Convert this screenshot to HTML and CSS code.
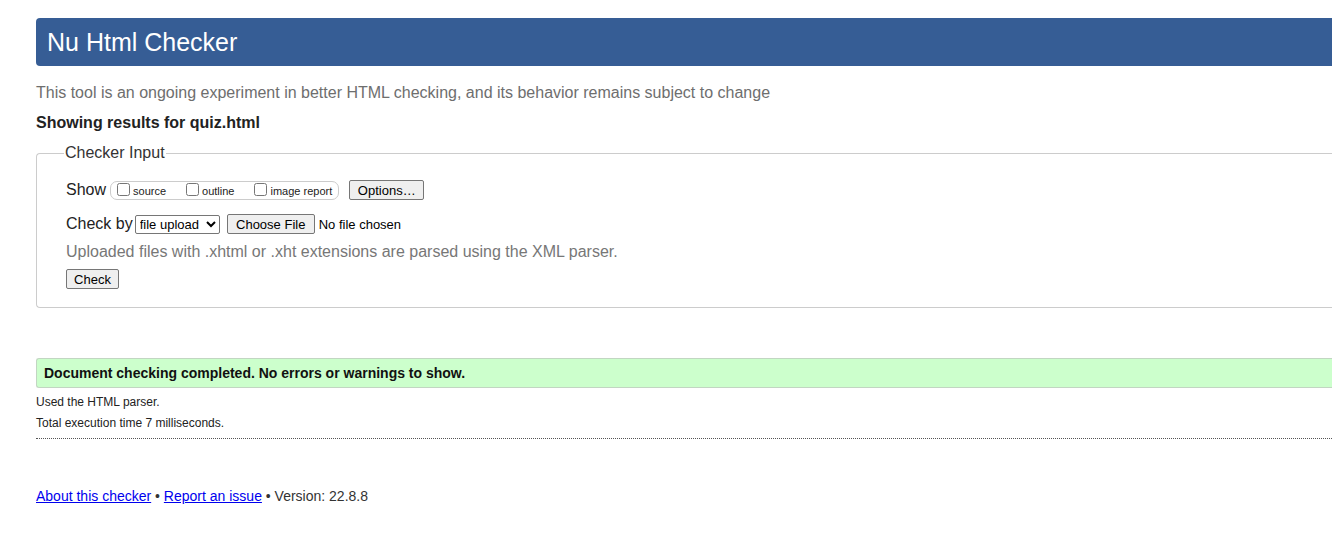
FILE: index.html
```html
<!DOCTYPE html>
<html lang="en">
<head>
<meta charset="utf-8">
<title>Showing results for quiz.html - Nu Html Checker</title>
<link rel="stylesheet" href="styles.css">
</head>
<body>
<div class="page">
  <h1 class="banner">Nu Html Checker</h1>
  <p class="intro">This tool is an ongoing experiment in better HTML checking, and its behavior remains subject to change</p>
  <p class="showing">Showing results for quiz.html</p>
  <form class="checker">
    <fieldset class="inputs">
      <legend class="legend">Checker Input</legend>
      <div class="row">
        <span class="label">Show</span>
        <span class="showbox">
          <label class="opt"><input type="checkbox" class="cb">source</label>
          <label class="opt"><input type="checkbox" class="cb">outline</label>
          <label class="opt last"><input type="checkbox" class="cb">image report</label>
        </span>
        <button type="button" class="btn options">Options…</button>
      </div>
      <div class="row">
        <span class="label">Check by</span>
        <select class="sel"><option>file upload</option></select>
        <button type="button" class="btn choose">Choose File</button>
        <span class="nofile">No file chosen</span>
      </div>
      <p class="hint">Uploaded files with .xhtml or .xht extensions are parsed using the XML parser.</p>
      <div class="row"><button type="button" class="btn check">Check</button></div>
    </fieldset>
  </form>
  <div class="success">Document checking completed. No errors or warnings to show.</div>
  <p class="details">Used the HTML parser.</p>
  <p class="details second">Total execution time 7 milliseconds.</p>
  <div class="dotted"></div>
  <p class="footer"><a href="#" class="link">About this checker</a> • <a href="#" class="link">Report an issue</a> • Version: 22.8.8</p>
</div>
</body>
</html>
```
FILE: styles.css
```css
html, body {
  margin: 0;
  padding: 0;
  overflow: hidden;
  background: #fff;
}
body {
  font-family: "Liberation Sans", Arial, sans-serif;
  color: #222;
}
.page {
  width: 1340px;
  margin-left: 36px;
  padding-top: 18px;
}
.banner {
  margin: 0;
  height: 48px;
  line-height: 48px;
  background: #365d95;
  color: #fff;
  font-size: 25px;
  font-weight: normal;
  padding-left: 11px;
  border-radius: 4px 0 0 4px;
}
.intro {
  margin: 17px 0 0;
  font-size: 16px;
  line-height: 20px;
  color: #6e6e6e;
}
.showing {
  margin: 10px 0 0;
  font-size: 16px;
  line-height: 20px;
  font-weight: bold;
  color: #222;
}
.checker { margin: 0; }
.inputs {
  margin: 11px 0 0;
  padding: 10px 0 18px 29px;
  border: 1px solid #ccc;
  border-right: none;
  border-radius: 4px 0 0 4px;
}
.legend {
  padding: 0 1px;
  margin-left: -2px;
  font-size: 16px;
  color: #333;
}
.row {
  display: flex;
  align-items: center;
  height: 20px;
  margin-top: 8px;
}
.row + .row { margin-top: 14px; }
.label {
  font-size: 16px;
  color: #222;
  margin-right: 4px;
}
.showbox {
  display: inline-flex;
  align-items: center;
  height: 17px;
  border: 1px solid #ccc;
  border-radius: 7px;
  padding: 0 6px 0 3px;
  margin-right: 10px;
}
.opt {
  display: inline-flex;
  align-items: center;
  font-size: 11px;
  color: #222;
  margin-right: 17px;
  padding-top: 2px;
}
.opt.last { margin-right: 0; }
.cb {
  margin: 0 3px 0 3px;
  width: 13px;
  height: 13px;
  position: relative;
  top: -2px;
}
.btn {
  font-family: "Liberation Sans", Arial, sans-serif;
  font-size: 13px;
  height: 20px;
  padding: 0 6px;
  border: 1px solid #767676;
  border-radius: 2px;
  background: #efefef;
  color: #000;
}
.options { width: 75px; }
.sel {
  font-family: "Liberation Sans", Arial, sans-serif;
  font-size: 13px;
  height: 19px;
  margin-left: -2px;
  margin-right: 7px;
  border: 1px solid #767676;
  border-radius: 2px;
  background: #fff;
  color: #000;
  width: 85px;
}
.choose { width: 88px; }
.nofile {
  font-size: 13px;
  margin-left: 4px;
  color: #000;
}
.hint {
  margin: 8px 0 0;
  font-size: 16px;
  line-height: 20px;
  color: #777;
}
.hint + .row { margin-top: 7px; }
.check { width: 53px; padding: 0; }
.success {
  margin-top: 50px;
  height: 28px;
  line-height: 28px;
  background: #ccffcc;
  border: 1px solid #c2d6c2;
  border-right: none;
  border-radius: 3px 0 0 3px;
  padding-left: 7px;
  font-size: 14px;
  font-weight: bold;
  color: #111;
}
.details {
  margin: 7px 0 0;
  font-size: 12px;
  line-height: 15px;
  color: #222;
}
.details.second { margin-top: 6px; }
.dotted {
  margin-top: 7px;
  border-top: 1px dotted #555;
}
.footer {
  margin: 49px 0 0;
  font-size: 14px;
  line-height: 16px;
  color: #333;
}
.link { color: #0000ee; }
```
